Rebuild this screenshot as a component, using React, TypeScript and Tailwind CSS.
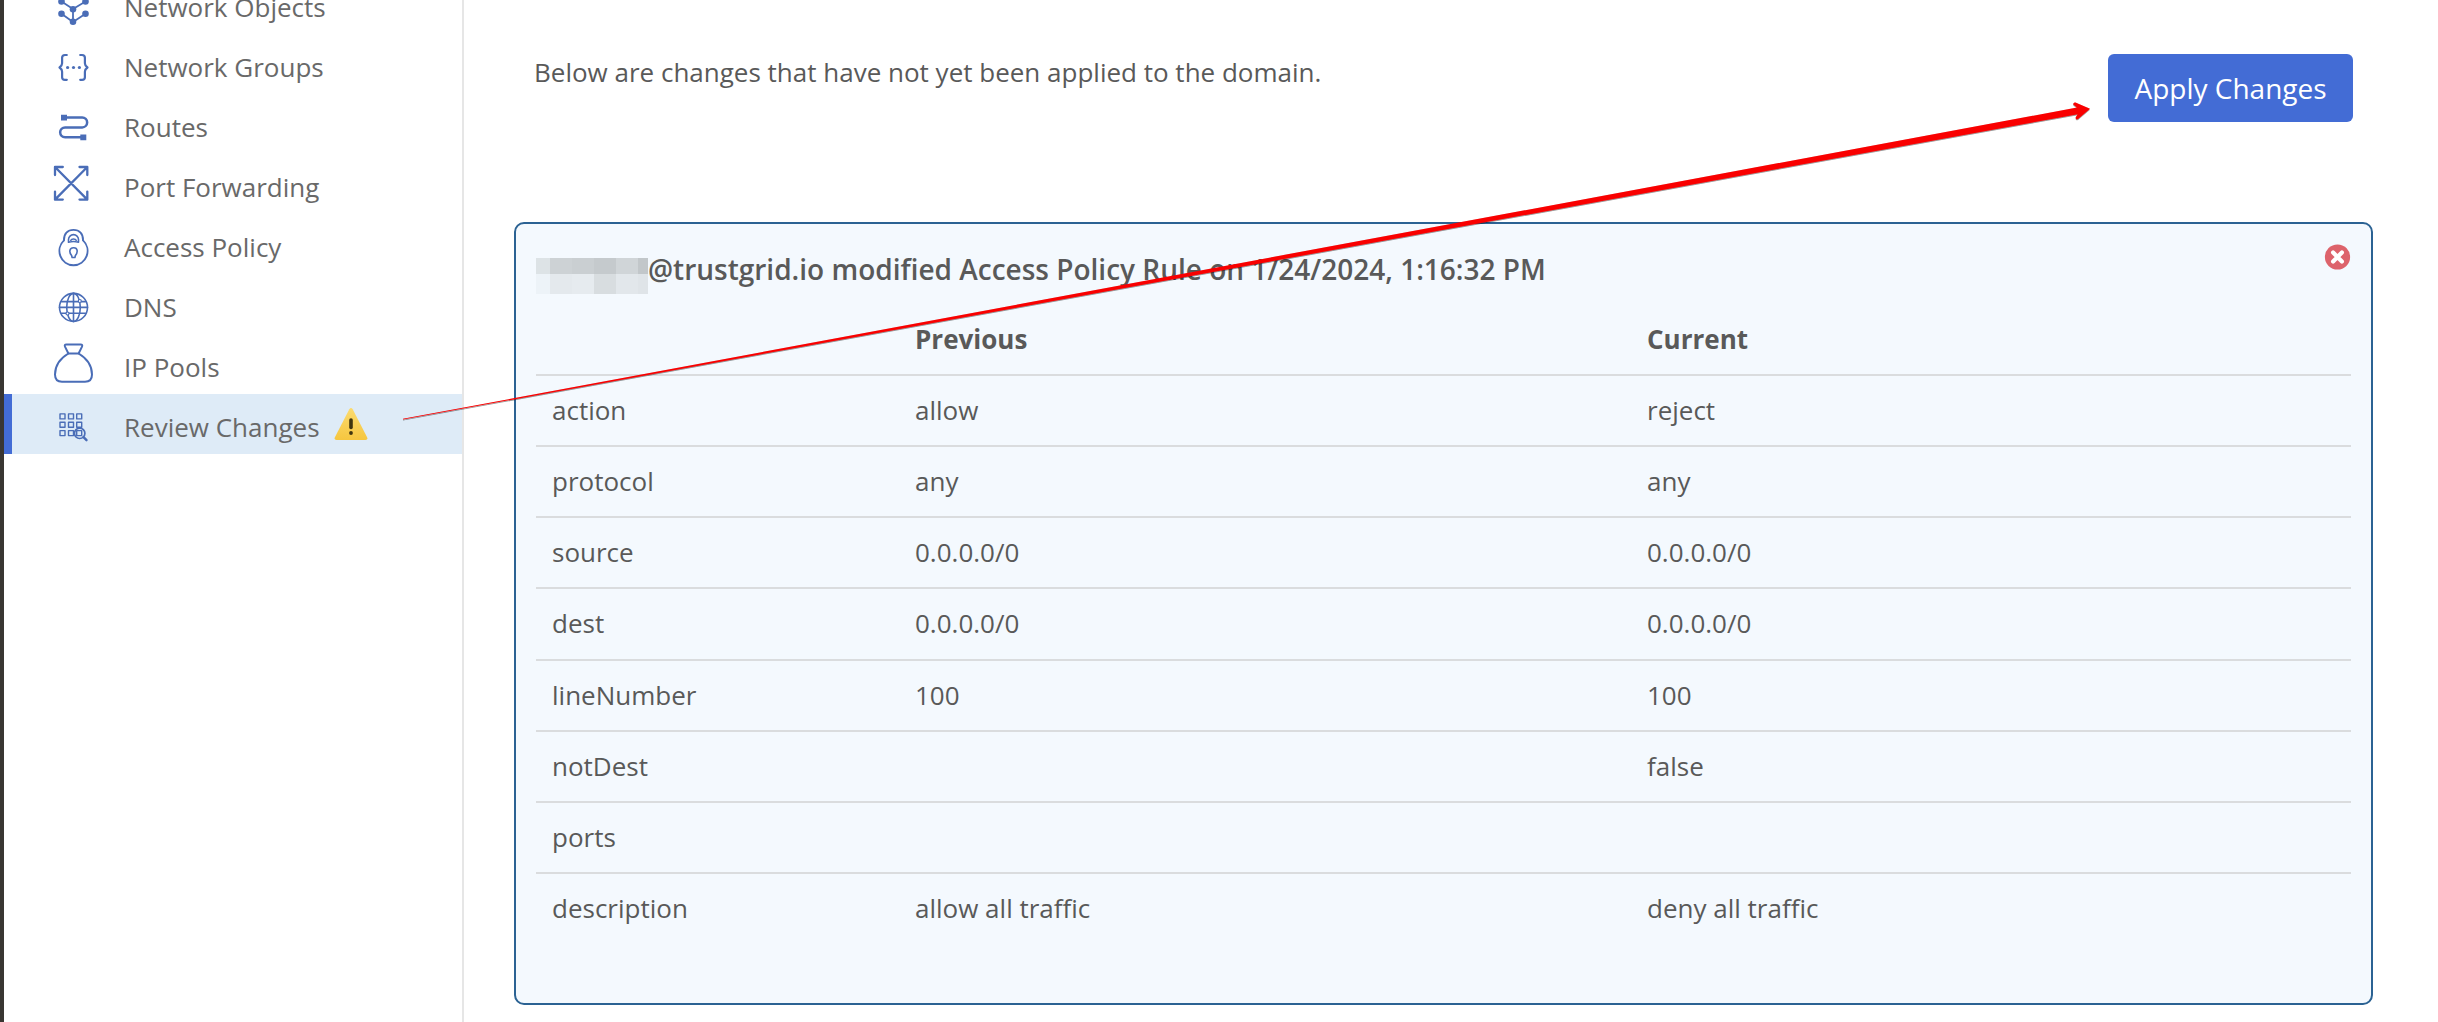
import React from "react";

type NavItem = { label: string; top: number; icon: React.ReactNode; active?: boolean };

const navItems: NavItem[] = [
  {
    label: "Network Objects",
    top: -26,
    icon: (
      <g>
        <path d="M61.5 1.5L73 9l12.5-7.5M61.5 13.8L73 22l12.5-8.2M73 9v13M61.5 1.5V-12L73-20l12.5 8v13.5" fill="none" strokeWidth="1.8" />
        {[[61.5, 1.5], [85.5, 1.5], [73, 9.2], [61.5, 13.8], [85.5, 13.8], [73, 21.8]].map(([x, y]) => (
          <circle key={`${x}-${y}`} cx={x} cy={y} r="3.3" fill="currentColor" stroke="none" />
        ))}
      </g>
    ),
  },
  {
    label: "Network Groups",
    top: 34,
    icon: (
      <g>
        <path
          d="M66.8 55H65c-2 0-2.9 1-2.9 2.8v5.4c0 1.9-.7 3-2.6 4.3 1.9 1.3 2.6 2.4 2.6 4.3v5.4c0 1.8.9 2.6 2.9 2.6h1.8M80.2 55H82c2 0 2.9 1 2.9 2.8v5.4c0 1.9.7 3 2.6 4.3-1.9 1.3-2.6 2.4-2.6 4.3v5.4c0 1.8-.9 2.6-2.9 2.6h-1.8"
          fill="none"
          strokeWidth="2.2"
        />
        <circle cx="67.6" cy="67.5" r="1.6" fill="currentColor" stroke="none" />
        <circle cx="73.5" cy="67.5" r="1.6" fill="currentColor" stroke="none" />
        <circle cx="79.4" cy="67.5" r="1.6" fill="currentColor" stroke="none" />
      </g>
    ),
  },
  {
    label: "Routes",
    top: 94,
    icon: (
      <g>
        <path d="M65 117.5h17.2a4.9 4.9 0 0 1 0 9.9H65.1a4.95 4.95 0 0 0 0 9.9H82" fill="none" strokeWidth="2.5" />
        <path d="M61 114.7h6v5.7h-6zM80.3 134.5h6v5.8h-6z" fill="currentColor" stroke="none" />
      </g>
    ),
  },
  {
    label: "Port Forwarding",
    top: 154,
    icon: (
      <path
        d="M55 167l32.3 32.6M87.300 167L55 199.600M62.8 167H55v8M79.5 167h7.8v8M55 191.6v8h7.8M87.3 191.6v8h-7.8"
        fill="none"
        strokeWidth="2.3"
      />
    ),
  },
  {
    label: "Access Policy",
    top: 214,
    icon: (
      <g fill="none" strokeWidth="1.9">
        <path d="M64 240.4C63.8 233.5 67.5 229.9 73.5 229.9S83.2 233.5 83 240.4A14.4 14.4 0 0 1 73.5 265.3A14.4 14.4 0 0 1 64 240.4" />
        <path d="M68.5 242.2v-2.6a5 5 0 0 1 10 0v2.6q-5-1.5-10 0zM70.8 240.3c.8-1.8 4.6-1.8 5.4 0" strokeWidth="1.6" />
        <path d="M71.6 255.5C69 252.5 69 248 73.5 247.8s4.5 4.7 1.9 7.7l-.5 2h-2.8z" strokeWidth="1.6" />
      </g>
    ),
  },
  {
    label: "DNS",
    top: 274,
    icon: (
      <g fill="none" strokeWidth="1.6">
        <circle cx="73.5" cy="307.4" r="14" />
        <ellipse cx="73.5" cy="307.4" rx="6.8" ry="14" />
        <path d="M73.5 293.4v28M59.5 307.4h28M61.5 301.6h24M61.5 313.2h24" />
        <circle cx="79.8" cy="301" r="1.5" fill="white" strokeWidth="1.2" />
        <circle cx="67.5" cy="313.5" r="1.5" fill="white" strokeWidth="1.2" />
      </g>
    ),
  },
  {
    label: "IP Pools",
    top: 334,
    icon: (
      <g fill="none" strokeWidth="2">
        <path d="M68.4 353.5l-3.3-6.6c-.8-1.7-.2-2.5 1.3-2.5h14.2c1.5 0 2.1.8 1.3 2.5l-3.3 6.6z" />
        <path d="M68.4 353.5C60 358.5 55 366 55 374.5c0 5 2.5 7.2 7 7.2h23c4.5 0 7-2.2 7-7.2 0-8.5-5-16-13.4-21" />
      </g>
    ),
  },
  {
    label: "Review Changes",
    top: 394,
    active: true,
    icon: (
      <g fill="none" strokeWidth="1.4">
        {[413.9, 422.3, 430.6].map((y) =>
          [60, 68.5, 76.7].map((x) => <rect key={`${x}-${y}`} x={x} y={y} width="5" height="5" />),
        )}
        <circle cx="79.7" cy="433.3" r="5.2" strokeWidth="1.7" />
        <path d="M83.5 437.2l3 3" strokeWidth="2.4" />
      </g>
    ),
  },
];

const rows: [string, string, string, string][] = [
  ["action", "allow", "reject", "h-[71px]"],
  ["protocol", "any", "any", "h-[71px]"],
  ["source", "0.0.0.0/0", "0.0.0.0/0", "h-[71px]"],
  ["dest", "0.0.0.0/0", "0.0.0.0/0", "h-[72px]"],
  ["lineNumber", "100", "100", "h-[71px]"],
  ["notDest", "", "false", "h-[71px]"],
  ["ports", "", "", "h-[71px]"],
  ["description", "allow all traffic", "deny all traffic", "h-[71px]"],
];

function WarningIcon() {
  return (
    <svg className="ml-[14px] mt-[13px] h-[34px] w-[34px]" viewBox="0 0 34 34">
      <defs>
        <linearGradient id="warn" x1="0" y1="0" x2="0" y2="1">
          <stop offset="0" stopColor="#fbdb70" />
          <stop offset="1" stopColor="#f6c63f" />
        </linearGradient>
      </defs>
      <path d="M15.3 2.2Q17 -.2 18.7 2.2L33.1 30.2Q34.2 33 31.5 33H2.5Q-.2 33 .9 30.2Z" fill="url(#warn)" />
      <path d="M17 13v7.5" stroke="#40350f" strokeWidth="3.6" strokeLinecap="round" />
      <circle cx="17" cy="26" r="1.9" fill="#40350f" />
    </svg>
  );
}

function Sidebar() {
  return (
    <nav className="h-full w-[464px] shrink-0 overflow-hidden border-l-4 border-r-2 border-l-[#393632] border-r-[#e6e6e6]">
      <div className="-mt-[26px] flex flex-col">
        {navItems.map((item) => (
          <a
            key={item.label}
            className={
              item.active
                ? "flex h-[60px] items-start border-l-8 border-[#436cd5] bg-[#deebf7] pl-8"
                : "flex h-[60px] items-start border-l-8 border-transparent pl-8"
            }
          >
            <svg
              className="mr-5 h-[60px] w-[60px] shrink-0 text-[#4a6db7]"
              viewBox={`44 ${item.top} 60 60`}
              stroke="currentColor"
              strokeLinecap="round"
              strokeLinejoin="round"
            >
              {item.icon}
            </svg>
            <span className="pt-[15px] text-[26px] leading-9 text-[#696969]">{item.label}</span>
            {item.active && <WarningIcon />}
          </a>
        ))}
      </div>
    </nav>
  );
}

function RedactedName() {
  return (
    <span className="grid h-9 w-[112px] grid-cols-[14px_22px_22px_22px_22px_10px] grid-rows-[16px_20px]">
      <i className="bg-[#dde3e6]" />
      <i className="bg-[#cdd2d5]" />
      <i className="bg-[#cacfd2]" />
      <i className="bg-[#c5cacd]" />
      <i className="bg-[#d0d5d8]" />
      <i className="bg-[#c2c7ca]" />
      <i className="bg-[#edf3f8]" />
      <i className="bg-[#e4e9ed]" />
      <i className="bg-[#e6ebef]" />
      <i className="bg-[#d8dde0]" />
      <i className="bg-[#e2e7eb]" />
      <i className="bg-[#dfe4e8]" />
    </span>
  );
}

function ChangeCard() {
  return (
    <section className="ml-[50px] mr-[65px] mt-[100px] h-[783px] rounded-[10px] border-2 border-[#2b6293] bg-[#f4f9fe] px-5">
      <header className="flex h-[97px] items-start">
        <div className="pt-[34px]">
          <RedactedName />
        </div>
        <h2 className="pt-[26px] text-[28px] font-semibold leading-[38px]">
          @trustgrid.io modified Access Policy Rule on 1/24/2024, 1:16:32 PM
        </h2>
        <svg className="ml-auto mt-5 h-[26px] w-[27px]" viewBox="0 0 27 26">
          <circle cx="13.5" cy="13" r="12.6" fill="#dd636b" />
          <path d="M9.1 8.6l8.8 8.8M17.9 8.6l-8.8 8.8" stroke="white" strokeWidth="4.2" strokeLinecap="round" />
        </svg>
      </header>
      <table className="w-full table-fixed border-separate border-spacing-0 text-left text-[26px] leading-9">
        <thead>
          <tr className="h-[53px] align-top font-bold">
            <th className="w-[363px] p-0" />
            <th className="w-[732px] p-0 pl-4">Previous</th>
            <th className="p-0 pl-4">Current</th>
          </tr>
        </thead>
        <tbody>
          {rows.map(([field, previous, current, height]) => (
            <tr key={field} className="align-top">
              <td className={`${height} border-t-2 border-[#dadcde] p-0 pl-4 pt-4`}>{field}</td>
              <td className="border-t-2 border-[#dadcde] p-0 pl-4 pt-4">{previous}</td>
              <td className="border-t-2 border-[#dadcde] p-0 pl-4 pt-4">{current}</td>
            </tr>
          ))}
        </tbody>
      </table>
    </section>
  );
}

function PointerArrow() {
  return (
    <svg className="pointer-events-none absolute inset-0 h-[1022px] w-[2438px]" viewBox="0 0 2438 1022">
      <defs>
        <filter id="shade" x="-5%" y="-10%" width="110%" height="120%">
          <feDropShadow dx="0" dy="0.7" stdDeviation="0.7" floodColor="#000000" floodOpacity="0.6" />
        </filter>
      </defs>
      <path
        d="M403 418.800L2077 107.600L2073.300 104.600Q2073 102 2075.500 102.500L2090 108.700L2078 119Q2075.500 120 2075.700 117.300L2077.700 114.200L403 419.600Z"
        fill="#f90000"
        filter="url(#shade)"
      />
    </svg>
  );
}

export default function App() {
  return (
    <div className="relative flex h-[1022px] w-[2438px] overflow-hidden bg-white font-['Open_Sans',sans-serif] text-[#595959]">
      <Sidebar />
      <main className="flex min-w-0 flex-1 flex-col">
        <div className="flex h-[122px] items-start justify-between pl-[70px] pr-[85px] pt-[54px]">
          <p className="text-[26px] leading-9">
            Below are changes that have not yet been applied to the domain.
          </p>
          <button className="h-[68px] w-[245px] rounded-md bg-[#436cd5] text-[28px] leading-[38px] text-white">
            Apply Changes
          </button>
        </div>
        <ChangeCard />
      </main>
      <PointerArrow />
    </div>
  );
}
